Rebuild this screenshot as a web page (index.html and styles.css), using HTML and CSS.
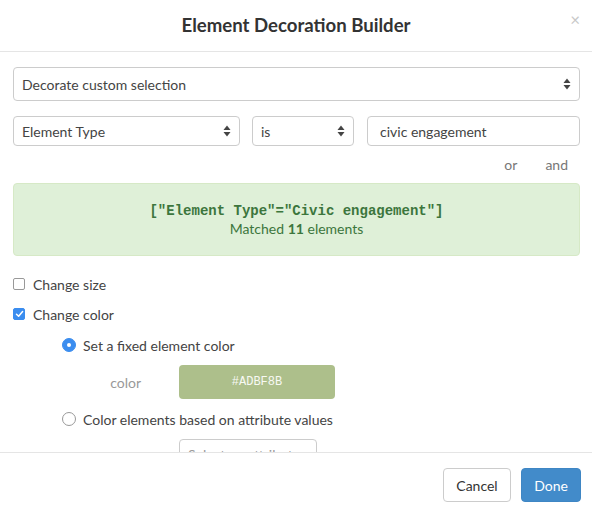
FILE: index.html
```html
<!DOCTYPE html>
<html>
<head>
<meta charset="utf-8">
<link rel="stylesheet" href="styles.css">
</head>
<body>
<div class="modal">
  <div class="header">
    <h1 class="title">Element Decoration Builder</h1>
    <span class="close">×</span>
  </div>
  <div class="body">
    <div class="select big">
      <span>Decorate custom selection</span>
      <svg class="arrows" width="8" height="12" viewBox="0 0 8 12"><path d="M4 0.5L7.5 5H0.5Z" fill="#444"/><path d="M4 11.5L7.5 7H0.5Z" fill="#444"/></svg>
    </div>
    <div class="row">
      <div class="select field-type">
        <span>Element Type</span>
        <svg class="arrows" width="8" height="12" viewBox="0 0 8 12"><path d="M4 0.5L7.5 5H0.5Z" fill="#444"/><path d="M4 11.5L7.5 7H0.5Z" fill="#444"/></svg>
      </div>
      <div class="select op">
        <span>is</span>
        <svg class="arrows" width="8" height="12" viewBox="0 0 8 12"><path d="M4 0.5L7.5 5H0.5Z" fill="#444"/><path d="M4 11.5L7.5 7H0.5Z" fill="#444"/></svg>
      </div>
      <div class="input">civic engagement</div>
    </div>
    <div class="logic">
      <span class="or">or</span>
      <span class="and">and</span>
    </div>
    <div class="match">
      <code class="query">["Element Type"="Civic engagement"]</code>
      <div class="count">Matched <b>11</b> elements</div>
    </div>
    <label class="check first">
      <span class="box"></span>
      <span>Change size</span>
    </label>
    <label class="check">
      <span class="box on"><svg width="9" height="8" viewBox="0 0 9 8"><path d="M1.5 4.2L3.6 6.2L7.6 1.5" fill="none" stroke="#fff" stroke-width="1.5" stroke-linecap="round" stroke-linejoin="round"/></svg></span>
      <span>Change color</span>
    </label>
    <label class="radio first-radio">
      <span class="dot on"></span>
      <span>Set a fixed element color</span>
    </label>
    <div class="color-row">
      <span class="color-label">color</span>
      <div class="swatch">#ADBF8B</div>
    </div>
    <label class="radio">
      <span class="dot"></span>
      <span>Color elements based on attribute values</span>
    </label>
    <div class="attr-row">
      <div class="select attr"><span>Select an attribute</span></div>
    </div>
  </div>
  <div class="footer">
    <button class="btn cancel">Cancel</button>
    <button class="btn done">Done</button>
  </div>
</div>
</body>
</html>
```

FILE: styles.css
```css
* { box-sizing: border-box; }
html, body { margin: 0; padding: 0; background: #fff; }
body {
  font-family: "Lato", "Open Sans", sans-serif;
  font-size: 14px;
  color: #444;
}
.modal {
  width: 592px;
  height: 514px;
  display: flex;
  flex-direction: column;
}
.header {
  position: relative;
  flex: none;
  height: 52px;
  border-bottom: 1px solid #e5e5e5;
  display: flex;
  align-items: center;
  justify-content: center;
}
.title {
  margin: 0 0 2px 0;
  font-size: 18.6px;
  font-weight: 700;
  color: #333;
}
.close {
  position: absolute;
  right: 12px;
  top: 9px;
  font-size: 17px;
  color: #c8c8c8;
}
.body {
  flex: none;
  height: 400px;
  overflow: hidden;
  padding: 15px 12px 0 13px;
  display: flex;
  flex-direction: column;
}
.body > * { flex-shrink: 0; }
.select, .input {
  border: 1px solid #ccc;
  border-radius: 4px;
  display: flex;
  align-items: center;
  padding: 0 8px;
  background: #fff;
  color: #444;
}
.select span { flex: 1; }
.arrows { flex: none; }
.big { height: 34px; }
.row {
  display: flex;
  margin-top: 15px;
  gap: 12px;
}
.row .select, .row .input { height: 30px; }
.field-type { width: 227px; }
.op { width: 102px; }
.input { flex: 1; margin-left: 1px; padding-left: 12px; }
.logic {
  height: 37px;
  display: flex;
  justify-content: flex-end;
  align-items: center;
  color: #777;
  padding-right: 12px;
}
.or { margin-right: 28px; }
.match {
  height: 73px;
  background: #dff0d8;
  border: 1px solid #d6e9c6;
  border-radius: 4px;
  color: #3c763d;
  display: flex;
  flex-direction: column;
  align-items: center;
  justify-content: center;
  gap: 1px;
}
.query {
  font-family: "Liberation Mono", monospace;
  font-weight: 700;
  font-size: 14px;
}
.count b { font-weight: 700; }
.check, .radio {
  display: flex;
  align-items: center;
  height: 20px;
}
.check.first { margin-top: 18px; }
.check + .check { margin-top: 10px; }
.box {
  width: 12px;
  height: 12px;
  border: 1px solid #999;
  border-radius: 2px;
  margin-right: 8px;
  display: flex;
  align-items: center;
  justify-content: center;
}
.box.on { background: #3b8def; border-color: #3b8def; }
.radio { padding-left: 49px; }
.first-radio { margin-top: 11px; }
.dot {
  width: 14px;
  height: 14px;
  border: 1px solid #999;
  border-radius: 50%;
  margin-right: 7px;
  position: relative;
}
.dot.on { background: #3b8def; border-color: #3b8def; }
.dot.on::after {
  content: "";
  position: absolute;
  width: 4px; height: 4px;
  background: #fff;
  border-radius: 50%;
  left: 4px; top: 4px;
}
.color-row {
  display: flex;
  align-items: center;
  margin-top: 10px;
  margin-bottom: 10px;
}
.color-label {
  width: 128px;
  text-align: right;
  color: #999;
}
.swatch {
  margin-left: 38px;
  width: 156px;
  height: 34px;
  background: #adbf8b;
  border-radius: 4px;
  color: #f7f9f3;
  font-family: "Liberation Mono", monospace;
  font-size: 12px;
  display: flex;
  align-items: center;
  justify-content: center;
}
.attr-row { padding-left: 166px; margin-top: 10px; }
.attr { width: 138px; height: 30px; color: #999; }
.footer {
  flex: 1;
  border-top: 1px solid #e5e5e5;
  display: flex;
  justify-content: flex-end;
  align-items: flex-start;
  padding: 15px 11px 0 0;
  gap: 10px;
}
.btn {
  font-family: inherit;
  font-size: 14px;
  height: 34px;
  border-radius: 4px;
  padding: 0 12px;
  border: 1px solid #ccc;
  background: #fff;
  color: #333;
}
.cancel { width: 68px; }
.done {
  width: 60px;
  background: #428bca;
  border-color: #3f86c4;
  color: #fff;
}
```
